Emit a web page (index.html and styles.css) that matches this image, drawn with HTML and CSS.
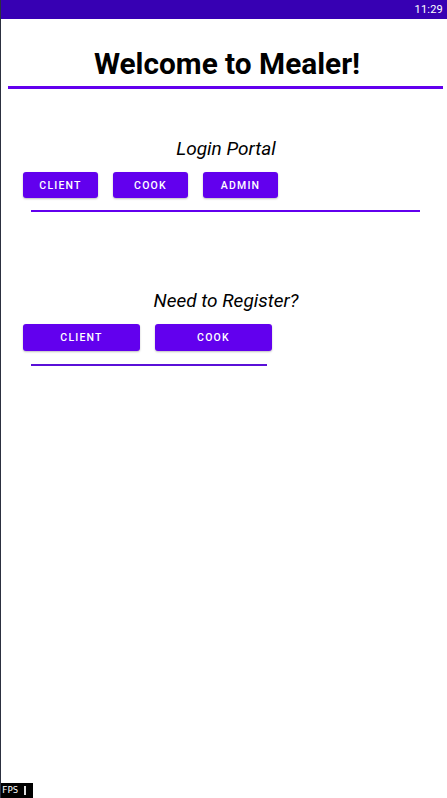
FILE: index.html
```html
<!DOCTYPE html>
<html>
<head>
<meta charset="utf-8">
<link rel="stylesheet" href="styles.css">
</head>
<body>
<div class="screen">
  <div class="statusbar"><span class="time">11:29</span></div>
  <div class="content">
    <h1 class="title">Welcome to Mealer!</h1>
    <div class="rule rule-head"></div>

    <h2 class="section-title login-title">Login Portal</h2>
    <div class="btn-row">
      <button class="btn btn-small">CLIENT</button>
      <button class="btn btn-small">COOK</button>
      <button class="btn btn-small">ADMIN</button>
    </div>
    <div class="rule rule-login"></div>

    <h2 class="section-title register-title">Need to Register?</h2>
    <div class="btn-row">
      <button class="btn btn-wide">CLIENT</button>
      <button class="btn btn-wide">COOK</button>
    </div>
    <div class="rule rule-register"></div>
  </div>
  <div class="fps"><span class="fps-text">FPS</span><span class="fps-bar"></span></div>
</div>
</body>
</html>
```
FILE: styles.css
```css
html, body {
  margin: 0;
  padding: 0;
  background: #ffffff;
}
.screen {
  position: relative;
  width: 447px;
  height: 798px;
  box-sizing: border-box;
  border-left: 1px solid #2c3040;
  overflow: hidden;
  font-family: Roboto, "Liberation Sans", sans-serif;
}
.statusbar {
  height: 19px;
  margin-left: -1px;
  background: #3700b3;
  display: flex;
  justify-content: flex-end;
  align-items: center;
  padding-right: 4px;
}
.time {
  color: #ffffff;
  font-size: 11px;
  letter-spacing: 0.2px;
}
.content {
  display: flex;
  flex-direction: column;
}
.title {
  margin: 27px 0 0 0;
  text-align: center;
  font-size: 29.8px;
  font-weight: 700;
  line-height: 36px;
  color: #000000;
  padding-left: 6px;
}
.rule {
  background: #6200ee;
}
.rule-head {
  height: 3px;
  margin: 4px 0 0 7px;
  width: 435px;
}
.section-title {
  margin: 0;
  text-align: center;
  font-size: 19px;
  font-style: italic;
  font-weight: 400;
  line-height: 24px;
  color: #000000;
  padding-left: 4px;
}
.login-title {
  margin-top: 48px;
}
.register-title {
  margin-top: 77px;
}
.btn-row {
  display: flex;
  gap: 15px;
  margin: 11px 0 0 22px;
}
.btn {
  border: none;
  border-radius: 3px;
  background: #6200ee;
  color: #ffffff;
  font-family: Roboto, "Liberation Sans", sans-serif;
  font-size: 10.5px;
  font-weight: 500;
  letter-spacing: 1.2px;
  padding: 0;
  box-shadow: 0 1px 2px rgba(0,0,0,0.25);
}
.btn-small {
  width: 75px;
  height: 26px;
}
.btn-wide {
  width: 117px;
  height: 27px;
}
.rule-login {
  height: 2px;
  margin: 12px 0 0 30px;
  width: 389px;
}
.rule-register {
  height: 1.5px;
  margin: 13px 0 0 30px;
  width: 236px;
  background: #5a10d8;
}
.fps {
  position: absolute;
  left: -1px;
  bottom: 0;
  width: 33px;
  height: 15px;
  background: #000000;
  display: flex;
  align-items: center;
  gap: 6px;
  padding-left: 2px;
  box-sizing: border-box;
}
.fps-text {
  color: #ffffff;
  font-family: "DejaVu Sans Mono", monospace;
  font-size: 9px;
  line-height: 9px;
}
.fps-bar {
  width: 2px;
  height: 9px;
  background: #e0e0e0;
}
```
